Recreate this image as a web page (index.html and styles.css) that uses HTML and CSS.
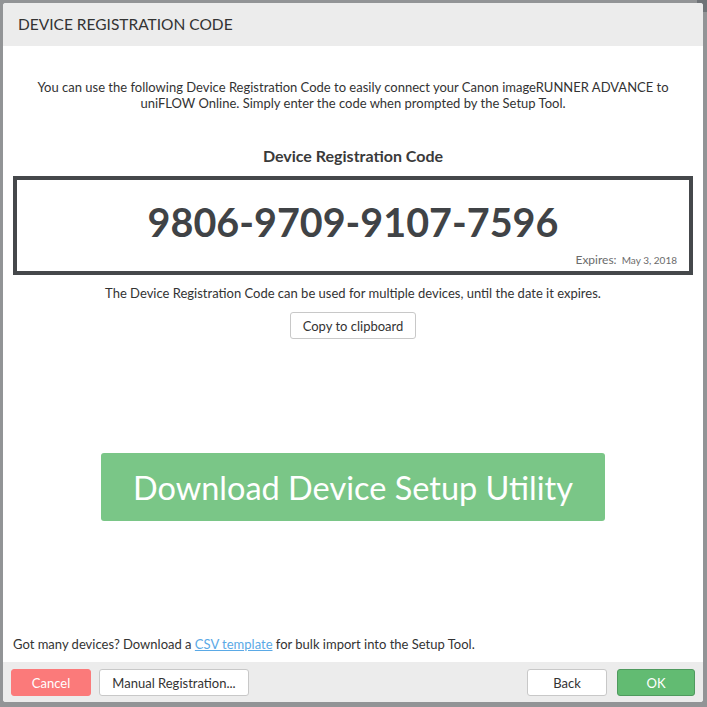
FILE: index.html
```html
<!DOCTYPE html>
<html lang="en">

<head>
  <meta charset="UTF-8" />
  <meta name="viewport" content="width=device-width, initial-scale=1.0" />
  <title>Device Registration Code</title>
  <link rel="stylesheet" href="styles.css">
</head>

<body>
  <div class="backdrop-bar"></div>
  <div class="modal">
    <div class="modal-header">DEVICE REGISTRATION CODE</div>

    <div class="modal-body">
      <p class="intro">You can use the following Device Registration Code to easily connect your Canon imageRUNNER ADVANCE to
        uniFLOW Online. Simply enter the code when prompted by the Setup Tool.</p>

      <h2 class="code-title">Device Registration Code</h2>
      <div class="code-box">
        <div class="code">9806-9709-9107-7596</div>
        <div class="expires"><span class="expires-label">Expires:</span> <span class="expires-date">May 3, 2018</span></div>
      </div>

      <p class="note">The Device Registration Code can be used for multiple devices, until the date it expires.</p>
      <div class="copy-row">
        <button class="btn">Copy to clipboard</button>
      </div>

      <div class="download-row">
        <button class="download">Download Device Setup Utility</button>
      </div>

      <p class="bulk">Got many devices? Download a <a href="#">CSV template</a> for bulk import into the Setup Tool.</p>
    </div>

    <div class="modal-footer">
      <button class="btn btn-cancel">Cancel</button>
      <button class="btn btn-manual">Manual Registration...</button>
      <div class="spacer"></div>
      <button class="btn btn-back">Back</button>
      <button class="btn btn-ok">OK</button>
    </div>
  </div>
</body>

</html>
```

FILE: styles.css
```css
html,
body {
  height: 100%;
}

body {
  margin: 0;
  padding: 3px 4px 5px 3px;
  box-sizing: border-box;
  background-color: #929496;
  font-family: Lato, "Open Sans", sans-serif;
  color: #333;
  position: relative;
}

/* darker strip of the page header behind the dialog */
.backdrop-bar {
  position: absolute;
  top: 0;
  right: 0;
  width: 10px;
  height: 12px;
  background-color: #6f7377;
}

.modal {
  position: relative;
  height: 100%;
  background-color: #fff;
  border-radius: 3px;
  display: flex;
  flex-direction: column;
  overflow: hidden;
}

.modal-header {
  background-color: #ececec;
  height: 43px;
  line-height: 43px;
  padding-left: 15px;
  font-size: 15.5px;
  color: #333;
}

.modal-body {
  flex: 1;
  display: flex;
  flex-direction: column;
  padding: 0 10px;
}

.intro {
  margin: 33px 20px 0;
  text-align: center;
  font-size: 13px;
  line-height: 16px;
}

.code-title {
  margin: 35px 0 0;
  text-align: center;
  font-size: 16px;
  font-weight: 700;
  line-height: 20px;
  color: #3a3a3a;
}

.code-box {
  margin-top: 10px;
  height: 91px;
  border: 4px solid #45484b;
  display: flex;
  flex-direction: column;
  align-items: center;
}

.code {
  margin-top: 20px;
  font-size: 39.5px;
  font-weight: 700;
  line-height: 44px;
  color: #404346;
}

.expires {
  align-self: flex-end;
  margin: 8px 12px 0 0;
  color: #6b6b6b;
  font-size: 12px;
}

.expires-date {
  font-size: 10px;
  margin-left: 2px;
}

.note {
  margin: 10px 0 0;
  text-align: center;
  font-size: 13px;
  line-height: 16px;
}

.copy-row {
  display: flex;
  justify-content: center;
  margin-top: 11px;
}

.btn {
  font-family: inherit;
  font-size: 13px;
  color: #333;
  background-color: #fff;
  border: 1px solid #c8c8c8;
  border-radius: 3px;
  height: 27px;
  padding: 0 10px;
}

.copy-row .btn {
  width: 126px;
}

.download-row {
  display: flex;
  justify-content: center;
  margin-top: 114px;
}

.download {
  width: 504px;
  height: 68px;
  background-color: #7ac687;
  color: #fff;
  border: none;
  border-radius: 3px;
  font-family: inherit;
  font-size: 32.5px;
}

.bulk {
  margin: auto 0 10px;
  font-size: 13px;
  line-height: 16px;
}

.bulk a {
  color: #5aa9e6;
}

.modal-footer {
  background-color: #ececec;
  height: 40px;
  box-sizing: border-box;
  padding: 7px 8px 0;
  display: flex;
  gap: 8px;
}

.spacer {
  flex: 1;
}

.btn-cancel {
  width: 80px;
  background-color: #fb7a7a;
  border-color: #fb7a7a;
  color: #fff;
}

.btn-manual {
  width: 150px;
}

.btn-back {
  width: 80px;
}

.btn-ok {
  width: 78px;
  margin-left: 2px;
  background-color: #62bb72;
  border-color: #4f9a5e;
  color: #fff;
}
```
